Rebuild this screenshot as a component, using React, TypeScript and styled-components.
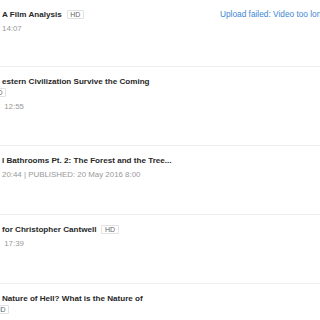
import React from "react";
import styled, { createGlobalStyle } from "styled-components";

const Global = createGlobalStyle`
	html, body {
		margin: 0;
		padding: 0;
		background: #fff;
		overflow: hidden;
	}
	body {
		font-family: "Liberation Sans", Arial, sans-serif;
	}
`;

const Page = styled.div`
	width: 320px;
	height: 320px;
	overflow: hidden;
`;

const Row = styled.div<{ $h: number }>`
	display: flex;
	height: ${({ $h }) => $h}px;
	box-sizing: border-box;
	border-bottom: 1px solid #eeeeee;
	padding-top: 9px;
`;

const Details = styled.div`
	flex: 0 0 220px;
	padding-left: 2px;
	box-sizing: border-box;
`;

const Title = styled.div`
	font-size: 8.1px;
	line-height: 11px;
	font-weight: 700;
	color: #282828;
	white-space: nowrap;
`;

const Line = styled.div`
	display: flex;
	align-items: center;
	height: 11px;
`;

const Badge = styled.span<{ $shift?: number }>`
	display: inline-block;
	margin-left: ${({ $shift }) => ($shift !== undefined ? $shift : 5)}px;
	padding: 0 2.5px;
	height: 9px;
	line-height: 8px;
	font-size: 7px;
	font-weight: 400;
	color: #666;
	border: 1px solid #e2e2e2;
	border-radius: 1px;
	box-sizing: border-box;
`;

const Meta = styled.div`
	margin-top: 3px;
	font-size: 7.9px;
	line-height: 11px;
	color: #999;
	white-space: nowrap;
`;

const Status = styled.div`
	flex: 0 0 auto;
	font-size: 8.3px;
	line-height: 11px;
	color: #3b86d4;
	white-space: nowrap;
`;

export default function App() {
	return (
		<Page>
			<Global />
			<Row $h={67}>
				<Details>
					<Line>
						<Title>A Film Analysis</Title>
						<Badge>HD</Badge>
					</Line>
					<Meta>14:07</Meta>
				</Details>
				<Status>Upload failed: Video too long</Status>
			</Row>
			<Row $h={79}>
				<Details>
					<Title>estern Civilization Survive the Coming</Title>
					<Line>
						<Badge $shift={-13}>HD</Badge>
					</Line>
					<Meta>&nbsp;12:55</Meta>
				</Details>
			</Row>
			<Row $h={69}>
				<Details>
					<Title>l Bathrooms Pt. 2: The Forest and the Tree...</Title>
					<Meta>20:44 | PUBLISHED: 20 May 2016 8:00</Meta>
				</Details>
			</Row>
			<Row $h={69}>
				<Details>
					<Line>
						<Title>for Christopher Cantwell</Title>
						<Badge>HD</Badge>
					</Line>
					<Meta>&nbsp;17:39</Meta>
				</Details>
			</Row>
			<Row $h={69}>
				<Details>
					<Title>Nature of Hell? What is the Nature of</Title>
					<Line>
						<Badge $shift={-10}>HD</Badge>
					</Line>
				</Details>
			</Row>
		</Page>
	);
}
